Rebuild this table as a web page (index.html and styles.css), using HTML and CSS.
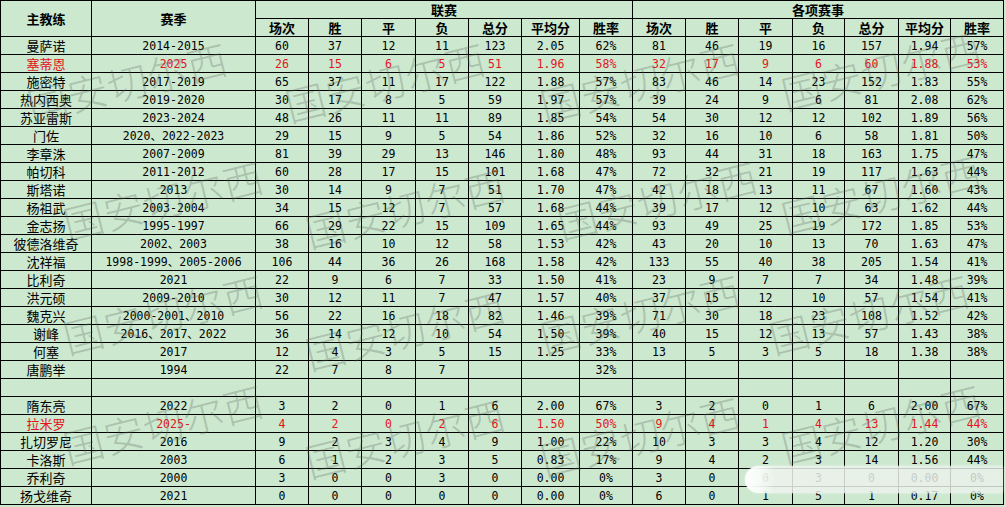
FILE: index.html
```html
<!DOCTYPE html>
<html lang="zh">
<head>
<meta charset="utf-8">
<title>国安主教练战绩</title>
<link rel="stylesheet" href="styles.css">
</head>
<body>
<div class="sheet">
<table class="grid">
<colgroup>
<col class="c-name"><col class="c-season">
<col class="c53"><col class="c53"><col class="c54"><col class="c53"><col class="c53"><col class="c58"><col class="c53">
<col class="c53"><col class="c53"><col class="c54"><col class="c52"><col class="c54"><col class="c52"><col class="c53">
</colgroup>
<thead>
<tr><th rowspan="2">主教练</th><th rowspan="2">赛季</th><th colspan="7">联赛</th><th colspan="7">各项赛事</th></tr>
<tr><th>场次</th><th>胜</th><th>平</th><th>负</th><th>总分</th><th>平均分</th><th>胜率</th><th>场次</th><th>胜</th><th>平</th><th>负</th><th>总分</th><th>平均分</th><th>胜率</th></tr>
</thead>
<tbody>
<tr><td class="name">曼萨诺</td><td>2014-2015</td><td>60</td><td>37</td><td>12</td><td>11</td><td>123</td><td>2.05</td><td>62%</td><td>81</td><td>46</td><td>19</td><td>16</td><td>157</td><td>1.94</td><td>57%</td></tr>
<tr class="red"><td class="name">塞蒂恩</td><td>2025</td><td>26</td><td>15</td><td>6</td><td>5</td><td>51</td><td>1.96</td><td>58%</td><td>32</td><td>17</td><td>9</td><td>6</td><td>60</td><td>1.88</td><td>53%</td></tr>
<tr><td class="name">施密特</td><td>2017-2019</td><td>65</td><td>37</td><td>11</td><td>17</td><td>122</td><td>1.88</td><td>57%</td><td>83</td><td>46</td><td>14</td><td>23</td><td>152</td><td>1.83</td><td>55%</td></tr>
<tr><td class="name">热内西奥</td><td>2019-2020</td><td>30</td><td>17</td><td>8</td><td>5</td><td>59</td><td>1.97</td><td>57%</td><td>39</td><td>24</td><td>9</td><td>6</td><td>81</td><td>2.08</td><td>62%</td></tr>
<tr><td class="name">苏亚雷斯</td><td>2023-2024</td><td>48</td><td>26</td><td>11</td><td>11</td><td>89</td><td>1.85</td><td>54%</td><td>54</td><td>30</td><td>12</td><td>12</td><td>102</td><td>1.89</td><td>56%</td></tr>
<tr><td class="name">门佐</td><td>2020、2022-2023</td><td>29</td><td>15</td><td>9</td><td>5</td><td>54</td><td>1.86</td><td>52%</td><td>32</td><td>16</td><td>10</td><td>6</td><td>58</td><td>1.81</td><td>50%</td></tr>
<tr><td class="name">李章洙</td><td>2007-2009</td><td>81</td><td>39</td><td>29</td><td>13</td><td>146</td><td>1.80</td><td>48%</td><td>93</td><td>44</td><td>31</td><td>18</td><td>163</td><td>1.75</td><td>47%</td></tr>
<tr><td class="name">帕切科</td><td>2011-2012</td><td>60</td><td>28</td><td>17</td><td>15</td><td>101</td><td>1.68</td><td>47%</td><td>72</td><td>32</td><td>21</td><td>19</td><td>117</td><td>1.63</td><td>44%</td></tr>
<tr><td class="name">斯塔诺</td><td>2013</td><td>30</td><td>14</td><td>9</td><td>7</td><td>51</td><td>1.70</td><td>47%</td><td>42</td><td>18</td><td>13</td><td>11</td><td>67</td><td>1.60</td><td>43%</td></tr>
<tr><td class="name">杨祖武</td><td>2003-2004</td><td>34</td><td>15</td><td>12</td><td>7</td><td>57</td><td>1.68</td><td>44%</td><td>39</td><td>17</td><td>12</td><td>10</td><td>63</td><td>1.62</td><td>44%</td></tr>
<tr><td class="name">金志扬</td><td>1995-1997</td><td>66</td><td>29</td><td>22</td><td>15</td><td>109</td><td>1.65</td><td>44%</td><td>93</td><td>49</td><td>25</td><td>19</td><td>172</td><td>1.85</td><td>53%</td></tr>
<tr><td class="name">彼德洛维奇</td><td>2002、2003</td><td>38</td><td>16</td><td>10</td><td>12</td><td>58</td><td>1.53</td><td>42%</td><td>43</td><td>20</td><td>10</td><td>13</td><td>70</td><td>1.63</td><td>47%</td></tr>
<tr><td class="name">沈祥福</td><td>1998-1999、2005-2006</td><td>106</td><td>44</td><td>36</td><td>26</td><td>168</td><td>1.58</td><td>42%</td><td>133</td><td>55</td><td>40</td><td>38</td><td>205</td><td>1.54</td><td>41%</td></tr>
<tr><td class="name">比利奇</td><td>2021</td><td>22</td><td>9</td><td>6</td><td>7</td><td>33</td><td>1.50</td><td>41%</td><td>23</td><td>9</td><td>7</td><td>7</td><td>34</td><td>1.48</td><td>39%</td></tr>
<tr><td class="name">洪元硕</td><td>2009-2010</td><td>30</td><td>12</td><td>11</td><td>7</td><td>47</td><td>1.57</td><td>40%</td><td>37</td><td>15</td><td>12</td><td>10</td><td>57</td><td>1.54</td><td>41%</td></tr>
<tr><td class="name">魏克兴</td><td>2000-2001、2010</td><td>56</td><td>22</td><td>16</td><td>18</td><td>82</td><td>1.46</td><td>39%</td><td>71</td><td>30</td><td>18</td><td>23</td><td>108</td><td>1.52</td><td>42%</td></tr>
<tr><td class="name">谢峰</td><td>2016、2017、2022</td><td>36</td><td>14</td><td>12</td><td>10</td><td>54</td><td>1.50</td><td>39%</td><td>40</td><td>15</td><td>12</td><td>13</td><td>57</td><td>1.43</td><td>38%</td></tr>
<tr><td class="name">何塞</td><td>2017</td><td>12</td><td>4</td><td>3</td><td>5</td><td>15</td><td>1.25</td><td>33%</td><td>13</td><td>5</td><td>3</td><td>5</td><td>18</td><td>1.38</td><td>38%</td></tr>
<tr><td class="name">唐鹏举</td><td>1994</td><td>22</td><td>7</td><td>8</td><td>7</td><td></td><td></td><td>32%</td><td></td><td></td><td></td><td></td><td></td><td></td><td></td></tr>
<tr><td></td><td></td><td></td><td></td><td></td><td></td><td></td><td></td><td></td><td></td><td></td><td></td><td></td><td></td><td></td><td></td></tr>
<tr><td class="name">隋东亮</td><td>2022</td><td>3</td><td>2</td><td>0</td><td>1</td><td>6</td><td>2.00</td><td>67%</td><td>3</td><td>2</td><td>0</td><td>1</td><td>6</td><td>2.00</td><td>67%</td></tr>
<tr class="red"><td class="name">拉米罗</td><td>2025-</td><td>4</td><td>2</td><td>0</td><td>2</td><td>6</td><td>1.50</td><td>50%</td><td>9</td><td>4</td><td>1</td><td>4</td><td>13</td><td>1.44</td><td>44%</td></tr>
<tr><td class="name">扎切罗尼</td><td>2016</td><td>9</td><td>2</td><td>3</td><td>4</td><td>9</td><td>1.00</td><td>22%</td><td>10</td><td>3</td><td>3</td><td>4</td><td>12</td><td>1.20</td><td>30%</td></tr>
<tr><td class="name">卡洛斯</td><td>2003</td><td>6</td><td>1</td><td>2</td><td>3</td><td>5</td><td>0.83</td><td>17%</td><td>9</td><td>4</td><td>2</td><td>3</td><td>14</td><td>1.56</td><td>44%</td></tr>
<tr><td class="name">乔利奇</td><td>2000</td><td>3</td><td>0</td><td>0</td><td>3</td><td>0</td><td>0.00</td><td>0%</td><td>3</td><td>0</td><td>0</td><td>3</td><td>0</td><td>0.00</td><td>0%</td></tr>
<tr><td class="name">扬戈维奇</td><td>2021</td><td>0</td><td>0</td><td>0</td><td>0</td><td>0</td><td>0.00</td><td>0%</td><td>6</td><td>0</td><td>1</td><td>5</td><td>1</td><td>0.17</td><td>0%</td></tr>
</tbody>
</table>

<div class="wm-layer" aria-hidden="true">
<span class="wm r1 k1">国安切尔西</span><span class="wm r1 k2">国安切尔西</span><span class="wm r1 k3">国安切尔西</span><span class="wm r1 k4">国安切尔西</span>
<span class="wm r2 k1b">国安切尔西</span><span class="wm r2 k2b">国安切尔西</span><span class="wm r2 k3b">国安切尔西</span><span class="wm r2 k4">国安切尔西</span>
<span class="wm r3 k1b">国安切尔西</span><span class="wm r3 k2b">国安切尔西</span><span class="wm r3 k3">国安切尔西</span><span class="wm r3 k4c">国安切尔西</span>
<span class="wm r4 k1b">国安切尔西</span><span class="wm r4 k2b">国安切尔西</span><span class="wm r4 k3">国安切尔西</span><span class="wm r4 k4">国安切尔西</span>
</div>
<div class="smear"></div>
</div>
</body>
</html>
```

FILE: styles.css
```css
html, body {
  margin: 0;
  padding: 0;
  background: #cce8cf;
}

.sheet {
  position: relative;
  width: 1006px;
  height: 507px;
  overflow: hidden;
  background: #cce8cf;
}

.grid {
  border-collapse: collapse;
  table-layout: fixed;
  width: 1004px;
  color: #000;
}

.c-name { width: 91px; }
.c-season { width: 164px; }
.c52 { width: 52px; }
.c53 { width: 53px; }
.c54 { width: 54px; }
.c58 { width: 58px; }

.grid tr { height: 18px; }

.grid th,
.grid td {
  border: 1px solid #000;
  padding: 0;
  text-align: center;
  vertical-align: middle;
  white-space: nowrap;
  overflow: hidden;
  line-height: 16px;
}

.grid th {
  font-family: "Noto Sans CJK SC", sans-serif;
  font-weight: bold;
  font-size: 13px;
}

.grid td {
  font-family: "DejaVu Sans Mono", "Noto Sans CJK SC", monospace;
  font-size: 11.5px;
  padding-top: 1px;
}

.grid td.name {
  font-family: "Noto Sans CJK SC", sans-serif;
  font-size: 13px;
  padding-top: 0;
}

.grid tr.red td { color: #e3141b; }

.wm-layer {
  position: absolute;
  inset: 0;
  pointer-events: none;
}

.wm {
  position: absolute;
  font-family: "Noto Sans CJK SC", sans-serif;
  font-weight: 300;
  font-size: 40px;
  line-height: 40px;
  color: rgba(90, 100, 90, 0.3);
  transform-origin: 0 50%;
  transform: rotate(-14deg);
  white-space: nowrap;
  letter-spacing: 1px;
}

.r1 { top: 86px; }
.r2 { top: 204px; }
.r3 { top: 318px; }
.r4 { top: 428px; }

.k1 { left: 28px; }
.k2 { left: 286px; }
.k3 { left: 541px; }
.k4 { left: 782px; }
.k1b { left: 64px; }
.k2b { left: 306px; }
.k3b { left: 558px; }
.k4c { left: 770px; }

.r2.k2b { top: 212px; }
.r3.k2b { top: 334px; }
.r4.k2b { top: 442px; }
.r4.k3 { top: 440px; }
.r1.k4 { top: 74px; }
.r2.k4 { top: 198px; }

.smear {
  position: absolute;
  left: 745px;
  top: 466px;
  width: 258px;
  height: 27px;
  border-radius: 14px 2px 2px 14px;
  background: linear-gradient(to right,
    rgba(255, 255, 255, 0.98) 0px,
    rgba(250, 252, 250, 0.94) 14px,
    rgba(238, 243, 238, 0.86) 30px,
    rgba(234, 241, 234, 0.82) 100%);
  box-shadow: 0 0 3px rgba(255, 255, 255, 0.6);
}
```
